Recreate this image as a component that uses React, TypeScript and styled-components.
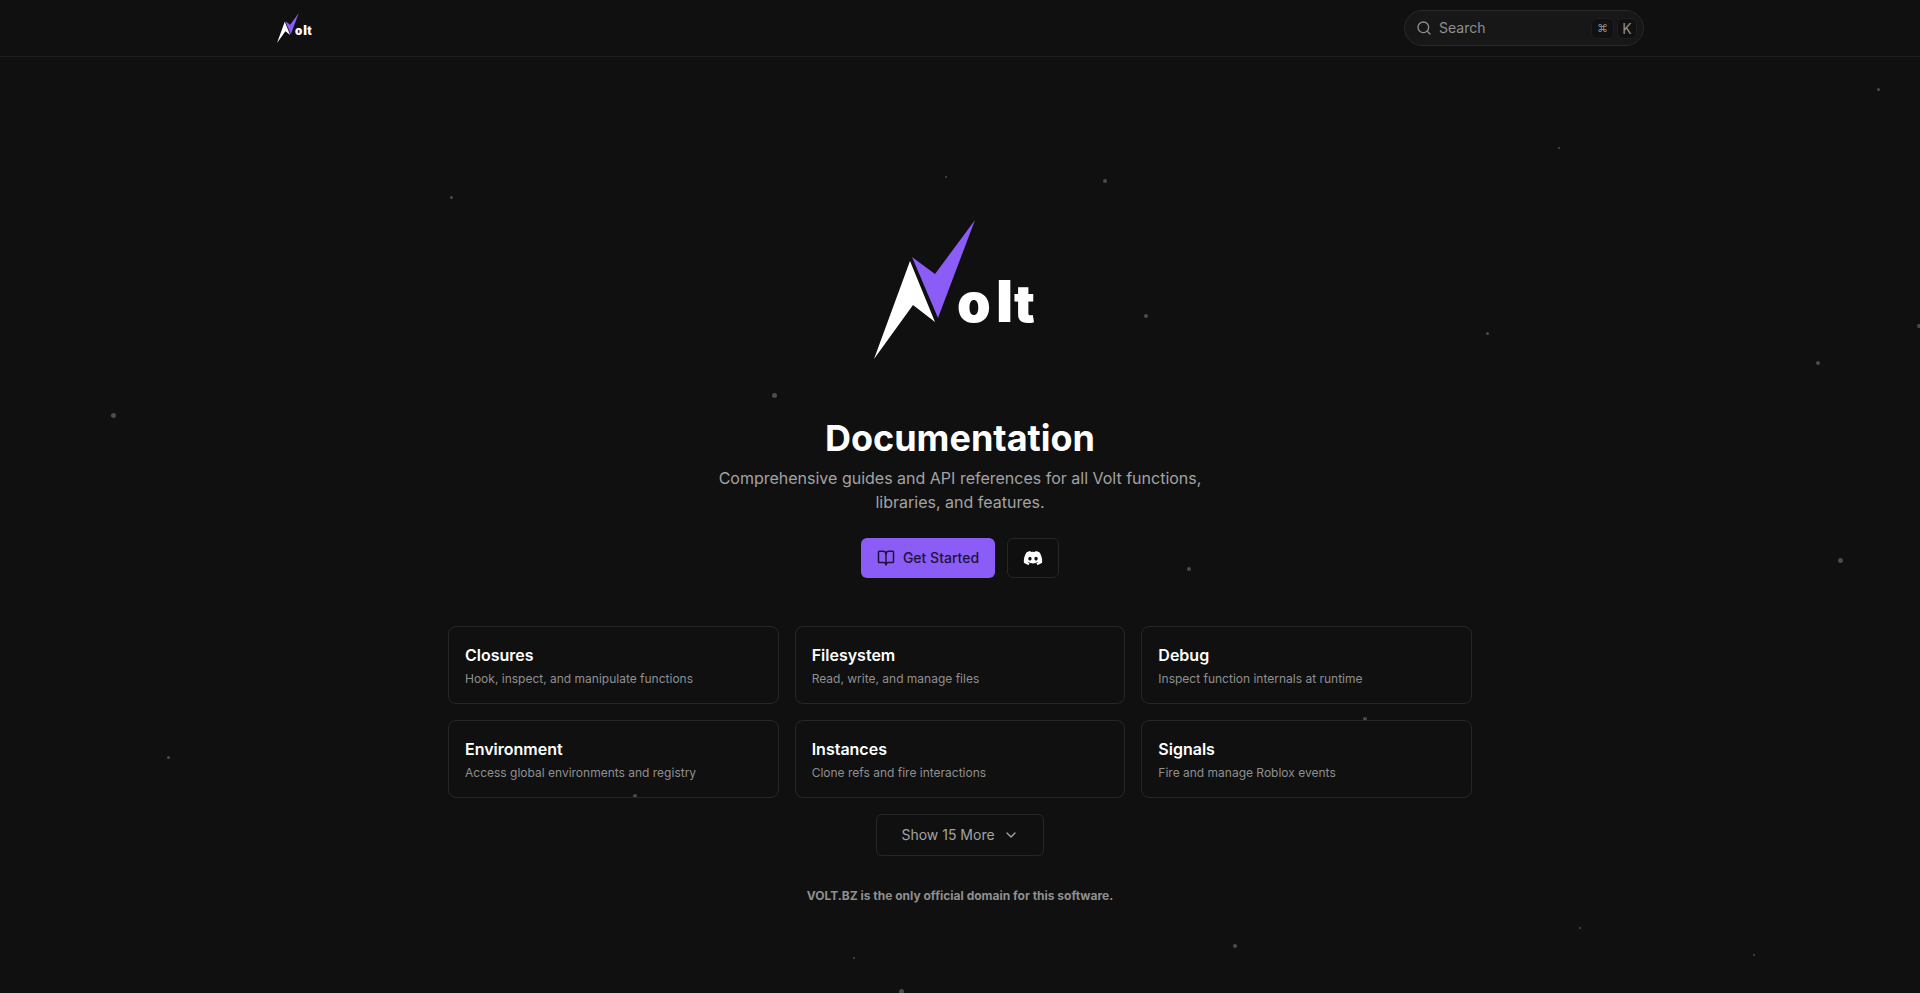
import styled, { createGlobalStyle } from 'styled-components'
import { BookOpen, ChevronDown, Search } from 'lucide-react'
import { FaDiscord } from 'react-icons/fa'

const GlobalStyle = createGlobalStyle`
  html, body {
    margin: 0;
    padding: 0;
    background: #101011;
  }
  body {
    font-family: Inter, "Liberation Sans", sans-serif;
    color: #fff;
    -webkit-font-smoothing: antialiased;
  }
  * {
    box-sizing: border-box;
  }
`

const Page = styled.div`
  position: relative;
  height: 993px;
  overflow: hidden;
  background: #101011;
`

const Star = styled.span.attrs<{ $x: number; $y: number; $size: number }>((p) => ({
  style: { left: p.$x, top: p.$y, width: p.$size, height: p.$size },
}))<{ $x: number; $y: number; $size: number }>`
  position: absolute;
  border-radius: 50%;
  background: #4b4b50;
`

const Header = styled.header`
  position: relative;
  height: 57px;
  border-bottom: 1px solid #1c1c1e;
  padding: 0 276px 0 277px;
  display: flex;
  justify-content: space-between;
  align-items: center;
`

const SearchBox = styled.div`
  width: 240px;
  height: 36px;
  border: 1px solid #29292b;
  border-radius: 18px;
  background: #171718;
  display: flex;
  align-items: center;
  padding: 0 6px 0 11px;
  color: #8f8f8f;
  font-size: 14px;
`

const SearchLabel = styled.span`
  margin-left: 7px;
  flex: 1;
  line-height: 20px;
  margin-top: -1px;
`

const Key = styled.kbd<{ $wide?: boolean }>`
  width: ${(p) => (p.$wide ? 23 : 20)}px;
  height: 21px;
  margin-left: 3px;
  border-radius: 6px;
  background: #111112;
  border: 1px solid #1f1f21;
  color: #8f8f8f;
  font-family: Inter, "DejaVu Sans", sans-serif;
  font-size: ${(p) => (p.$wide ? 11 : 14)}px;
  display: flex;
  align-items: center;
  justify-content: center;
`

const Main = styled.main`
  position: relative;
  display: flex;
  flex-direction: column;
  align-items: center;
  padding-top: 163px;
`

const Title = styled.h1`
  margin: 59px 0 0;
  font-size: 36px;
  line-height: 40px;
  font-weight: 700;
  color: #fff;
`

const Subtitle = styled.p`
  margin: 8px 0 0;
  width: 500px;
  text-align: center;
  font-size: 16px;
  line-height: 24px;
  color: #a3a3a3;
`

const Actions = styled.div`
  display: flex;
  gap: 12px;
  margin-top: 24px;
`

const PrimaryButton = styled.button`
  width: 134px;
  height: 40px;
  padding: 0 0 1px;
  border: 0;
  border-radius: 6px;
  background: #8b5cf6;
  color: #1e1338;
  font-family: inherit;
  font-size: 14px;
  font-weight: 500;
  display: flex;
  align-items: center;
  justify-content: center;
  gap: 8px;
`

const IconButton = styled.button`
  width: 52px;
  height: 40px;
  border: 1px solid #262628;
  border-radius: 6px;
  background: #0f0f10;
  color: #fff;
  display: flex;
  align-items: center;
  justify-content: center;
`

const CardGrid = styled.div`
  display: grid;
  grid-template-columns: repeat(3, 1fr);
  gap: 16px;
  width: 1024px;
  margin-top: 48px;
`

const Card = styled.a`
  height: 78px;
  padding: 16px;
  border: 1px solid #262628;
  border-radius: 8px;
`

const CardTitle = styled.div`
  font-size: 16px;
  line-height: 24px;
  font-weight: 600;
  color: #fff;
`

const CardText = styled.div`
  margin-top: 4px;
  font-size: 12px;
  line-height: 16px;
  color: #8f8f8f;
`

const MoreButton = styled.button`
  width: 168px;
  height: 42px;
  margin-top: 16px;
  padding: 0 0 1px;
  border: 1px solid #262628;
  border-radius: 6px;
  background: transparent;
  color: #a3a3a3;
  font-family: inherit;
  font-size: 14px;
  font-weight: 400;
  display: flex;
  align-items: center;
  justify-content: center;
  gap: 8px;
`

const Notice = styled.p`
  margin: 32px 0 0;
  font-size: 12px;
  line-height: 16px;
  font-weight: 700;
  color: #8f8f8f;
`

const LogoSvg = styled.svg`
  display: block;
`

const LogoText = styled.text`
  font-family: Inter, "Liberation Sans", sans-serif;
  font-weight: 900;
  fill: #fff;
`

const stars = [
  [1877, 88, 3], [1558, 147, 2], [1103, 179, 4], [945, 176, 2], [450, 196, 3],
  [1144, 314, 4], [1486, 332, 3], [1917, 324, 4], [1816, 361, 4], [772, 393, 5],
  [111, 413, 5], [1838, 558, 5], [1187, 567, 4], [1363, 717, 4], [167, 756, 3],
  [633, 794, 4], [1579, 927, 2], [1233, 944, 4], [1753, 954, 2], [853, 957, 2],
  [899, 989, 5],
]

const cards = [
  ['Closures', 'Hook, inspect, and manipulate functions'],
  ['Filesystem', 'Read, write, and manage files'],
  ['Debug', 'Inspect function internals at runtime'],
  ['Environment', 'Access global environments and registry'],
  ['Instances', 'Clone refs and fire interactions'],
  ['Signals', 'Fire and manage Roblox events'],
]

function Logo({ height }: { height: number }) {
  return (
    <LogoSvg width={(height * 172) / 139} height={height} viewBox="0 0 172 139">
      <polygon points="0,139 36,41 61,102 39,85" fill="#fff" />
      <polygon points="38,37 61,54 101,0 64,98" fill="#8b5cf6" />
      <LogoText y="102">
        <tspan x="83" fontSize="54">o</tspan>
        <tspan x="122" fontSize="58">l</tspan>
        <tspan x="140" fontSize="52">t</tspan>
      </LogoText>
    </LogoSvg>
  )
}

export default function App() {
  return (
    <Page>
      <GlobalStyle />
      {stars.map(([x, y, size]) => (
        <Star key={`${x}-${y}`} $x={x} $y={y} $size={size} />
      ))}
      <Header>
        <Logo height={30} />
        <SearchBox>
          <Search size={16} />
          <SearchLabel>Search</SearchLabel>
          <Key $wide>⌘</Key>
          <Key>K</Key>
        </SearchBox>
      </Header>
      <Main>
        <Logo height={139} />
        <Title>Documentation</Title>
        <Subtitle>
          Comprehensive guides and API references for all Volt functions, libraries, and features.
        </Subtitle>
        <Actions>
          <PrimaryButton>
            <BookOpen size={18} />
            Get Started
          </PrimaryButton>
          <IconButton>
            <FaDiscord size={20} />
          </IconButton>
        </Actions>
        <CardGrid>
          {cards.map(([title, text]) => (
            <Card key={title}>
              <CardTitle>{title}</CardTitle>
              <CardText>{text}</CardText>
            </Card>
          ))}
        </CardGrid>
        <MoreButton>
          Show 15 More
          <ChevronDown size={16} />
        </MoreButton>
        <Notice>VOLT.BZ is the only official domain for this software.</Notice>
      </Main>
    </Page>
  )
}
